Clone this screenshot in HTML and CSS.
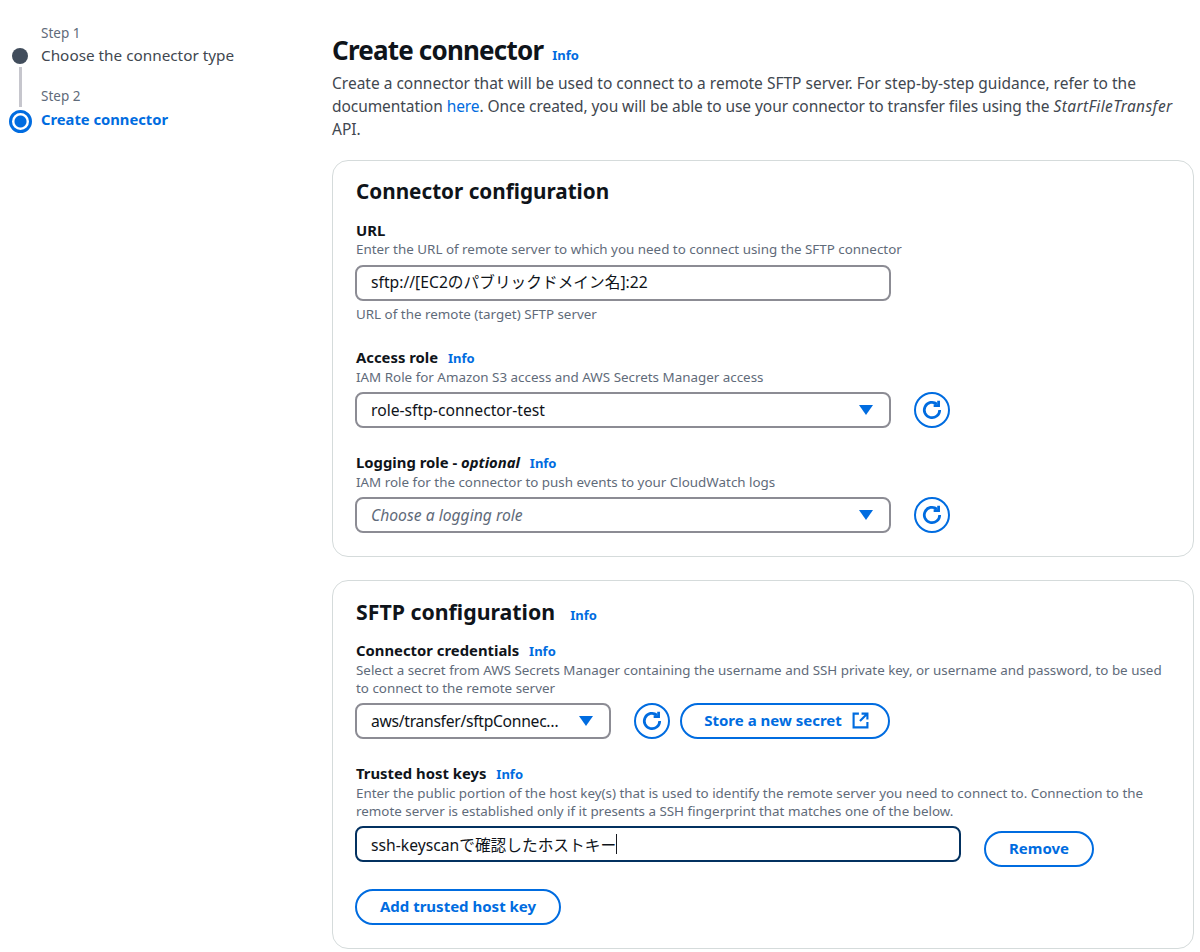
FILE: index.html
```html
<!DOCTYPE html>
<html lang="en">
<head>
    <meta charset="UTF-8">
    <title>Create connector</title>
    <link rel="stylesheet" href="styles.css">
</head>
<body>

<div class="page">
    <nav class="steps">
        <div class="step step-done">
            <div class="step-label">Step 1</div>
            <div class="step-row">
                <span class="dot"></span>
                <span class="step-name">Choose the connector type</span>
            </div>
            <span class="step-line"></span>
        </div>
        <div class="step step-current">
            <div class="step-label">Step 2</div>
            <div class="step-row">
                <span class="dot"></span>
                <span class="step-name">Create connector</span>
            </div>
        </div>
    </nav>

    <main class="content">
        <div class="page-title">
            <h1>Create connector</h1>
            <a class="info">Info</a>
        </div>
        <p class="intro">Create a connector that will be used to connect to a remote SFTP server. For step-by-step guidance, refer to the <span class="tight">documentation <a class="link">here</a>. Once created, you will be able to use your connector to transfer files using the</span> <em>StartFileTransfer</em> API.</p>

        <section class="card card-connector">
            <h2>Connector configuration</h2>

            <div class="field field-url">
                <div class="label">URL</div>
                <div class="desc">Enter the URL of remote server to which you need to connect using the SFTP connector</div>
                <div class="input input-url wide">sftp://[EC2のパブリックドメイン名]:22</div>
                <div class="hint">URL of the remote (target) SFTP server</div>
            </div>

            <div class="field field-role">
                <div class="label">Access role <a class="info">Info</a></div>
                <div class="desc">IAM Role for Amazon S3 access and AWS Secrets Manager access</div>
                <div class="control-row">
                    <div class="input select wide">
                        <span>role-sftp-connector-test</span>
                        <span class="caret"></span>
                    </div>
                    <button class="refresh" aria-label="Refresh">
                        <svg viewBox="0 0 16 16" width="22" height="22"><path d="M13.6 8a5.6 5.6 0 1 1-2-4.3" fill="none" stroke="currentColor" stroke-width="2"/><path d="M12.8 1.2v3.6H9.2" fill="none" stroke="currentColor" stroke-width="2"/></svg>
                    </button>
                </div>
            </div>

            <div class="field field-logging">
                <div class="label">Logging role - <em>optional</em> <a class="info">Info</a></div>
                <div class="desc">IAM role for the connector to push events to your CloudWatch logs</div>
                <div class="control-row">
                    <div class="input select wide">
                        <span class="placeholder">Choose a logging role</span>
                        <span class="caret"></span>
                    </div>
                    <button class="refresh" aria-label="Refresh">
                        <svg viewBox="0 0 16 16" width="22" height="22"><path d="M13.6 8a5.6 5.6 0 1 1-2-4.3" fill="none" stroke="currentColor" stroke-width="2"/><path d="M12.8 1.2v3.6H9.2" fill="none" stroke="currentColor" stroke-width="2"/></svg>
                    </button>
                </div>
            </div>
        </section>

        <section class="card card-sftp">
            <div class="card-title">
                <h2>SFTP configuration</h2>
                <a class="info">Info</a>
            </div>

            <div class="field field-creds">
                <div class="label">Connector credentials <a class="info">Info</a></div>
                <div class="desc">Select a secret from AWS Secrets Manager containing the username and SSH private key, or username and password, to be used to connect to the remote server</div>
                <div class="control-row">
                    <div class="input select narrow">
                        <span class="truncated">aws/transfer/sftpConnec…</span>
                        <span class="caret"></span>
                    </div>
                    <button class="refresh" aria-label="Refresh">
                        <svg viewBox="0 0 16 16" width="22" height="22"><path d="M13.6 8a5.6 5.6 0 1 1-2-4.3" fill="none" stroke="currentColor" stroke-width="2"/><path d="M12.8 1.2v3.6H9.2" fill="none" stroke="currentColor" stroke-width="2"/></svg>
                    </button>
                    <button class="btn btn-secret">
                        Store a new secret
                        <svg viewBox="0 0 16 16" width="17" height="17"><path d="M6.5 1.5H1.5v13h13v-5" fill="none" stroke="currentColor" stroke-width="2"/><path d="M9 1.5h5.5V7M14.5 1.5 7.5 8.5" fill="none" stroke="currentColor" stroke-width="2"/></svg>
                    </button>
                </div>
            </div>

            <div class="field field-keys">
                <div class="label">Trusted host keys <a class="info">Info</a></div>
                <div class="desc">Enter the public portion of the host key(s) that is used to identify the remote server you need to connect to. Connection to the remote server is established only if it presents a SSH fingerprint that matches one of the below.</div>
                <div class="key-row">
                    <div class="input focused">ssh-keyscanで確認したホストキー<span class="cursor"></span></div>
                    <button class="btn btn-remove">Remove</button>
                </div>
                <button class="btn btn-add">Add trusted host key</button>
            </div>
        </section>
    </main>
</div>

</body>
</html>
```

FILE: styles.css
```css
* {
    box-sizing: border-box;
}
body {
    margin: 0;
    font-family: "Noto Sans", "Noto Sans CJK JP", sans-serif;
    font-size: 15.5px;
    color: #16191f;
    background: white;
}
.page {
    display: flex;
    height: 952px;
    overflow: hidden;
}

/* wizard steps */
.steps {
    width: 332px;
    flex: none;
    padding-top: 23px;
}
.step {
    position: relative;
    padding-left: 41px;
}
.step-label {
    font-size: 13.5px;
    line-height: 20px;
    color: #5f6b7a;
}
.step-row {
    display: flex;
    align-items: center;
    height: 24px;
}
.step-name {
    font-size: 15.3px;
    color: #414750;
}
.step-done {
    height: 63px;
}
.step-done .dot {
    position: absolute;
    left: 12px;
    top: 25px;
    width: 16px;
    height: 16px;
    border-radius: 50%;
    background: #414d5c;
}
.step-line {
    position: absolute;
    left: 19px;
    top: 44px;
    width: 3px;
    height: 40px;
    background: #c6c6cd;
}
.step-current .step-row {
    padding-top: 1px;
}
.step-current .dot {
    position: absolute;
    left: 9px;
    top: 24px;
    width: 23px;
    height: 23px;
    border-radius: 50%;
    border: 3px solid #006ce0;
    background: radial-gradient(circle, #006ce0 0 5.5px, white 6.5px);
}
.step-current .step-name {
    font-size: 14.75px;
    font-weight: 700;
    color: #006ce0;
}

/* main column */
.content {
    width: 862px;
    flex: none;
    padding-top: 31px;
}
.page-title {
    display: flex;
    align-items: baseline;
    gap: 9px;
}
h1 {
    margin: 0;
    font-size: 26px;
    line-height: 38px;
    letter-spacing: -0.8px;
    font-weight: 700;
    color: #0f141a;
}
.intro {
    margin: 3px 0 19px;
    font-size: 15.5px;
    line-height: 23px;
    color: #414750;
}
.tight {
    letter-spacing: -0.07px;
}
.intro em {
    letter-spacing: 0.4px;
}
.info {
    font-size: 13px;
    font-weight: 700;
    color: #006ce0;
    margin-left: 6px;
}
.page-title .info, .card-title .info {
    margin-left: 0;
}
.link {
    color: #006ce0;
}
.card {
    border: 1px solid #d5dbdb;
    border-radius: 16px;
    padding: 15px 16px 15px 23px;
    margin-bottom: 23px;
}
.card-connector {
    height: 397px;
}
.card-sftp {
    height: 369px;
    padding-top: 16px;
}
h2 {
    margin: 0;
    font-size: 20.7px;
    line-height: 30px;
    font-weight: 700;
    color: #0f141a;
}
.card-title {
    display: flex;
    align-items: baseline;
    gap: 15px;
}
.card-title h2 {
    font-size: 21.3px;
}

/* form fields */
.field-url {
    margin-top: 14px;
}
.field-role, .field-logging {
    margin-top: 24px;
}
.field-creds {
    margin-top: 13px;
}
.field-keys {
    margin-top: 24px;
}
.label {
    font-size: 14.85px;
    line-height: 20px;
    font-weight: 700;
    color: #0f141a;
}
.label em {
    font-weight: 700;
}
.desc, .hint {
    font-size: 13.4px;
    line-height: 18px;
    color: #5f6b7a;
}
.hint {
    margin-top: 4px;
}
.input {
    display: flex;
    align-items: center;
    height: 36px;
    margin-top: 6px;
    padding: 0 14px;
    border: 2px solid #8c8c94;
    border-radius: 8px;
    font-size: 15.7px;
    color: #0f141a;
    background: white;
}
.input-url {
    margin-top: 7px;
    margin-left: -1px;
    padding-bottom: 3px;
}
.wide {
    width: 536px;
}
.narrow {
    width: 256px;
}
.select {
    justify-content: space-between;
}
.placeholder {
    font-style: italic;
    color: #5f6b7a;
}
.truncated {
    letter-spacing: -0.3px;
}
.caret {
    width: 0;
    height: 0;
    border-left: 7px solid transparent;
    border-right: 7px solid transparent;
    border-top: 10px solid #006ce0;
    margin-right: 2px;
}
.control-row {
    display: flex;
    align-items: center;
    margin-top: 6px;
    margin-left: -1px;
}
.control-row .input {
    margin-top: 0;
}
.refresh {
    display: flex;
    align-items: center;
    justify-content: center;
    width: 36px;
    height: 36px;
    margin-left: 23px;
    padding: 0;
    border: 2px solid #006ce0;
    border-radius: 50%;
    background: white;
    color: #006ce0;
}
.btn {
    display: inline-flex;
    align-items: center;
    justify-content: center;
    height: 36px;
    padding: 0 0 2px;
    border: 2px solid #006ce0;
    border-radius: 20px;
    background: white;
    color: #006ce0;
    font-family: inherit;
    font-size: 15px;
    font-weight: 700;
}
.btn-secret {
    width: 210px;
    gap: 10px;
    margin-left: 10px;
    padding-left: 3px;
}
.key-row {
    display: flex;
    align-items: flex-start;
    margin-top: 6px;
    margin-left: -1px;
}
.focused {
    width: 606px;
    margin-top: 0;
    border-color: #033160;
}
.cursor {
    display: inline-block;
    width: 1px;
    height: 20px;
    background: #16191f;
}
.btn-remove {
    width: 110px;
    margin-left: 23px;
    margin-top: 5px;
    padding-bottom: 3px;
}
.btn-add {
    display: flex;
    width: 206px;
    margin-top: 22px;
    margin-left: -1px;
}
```
